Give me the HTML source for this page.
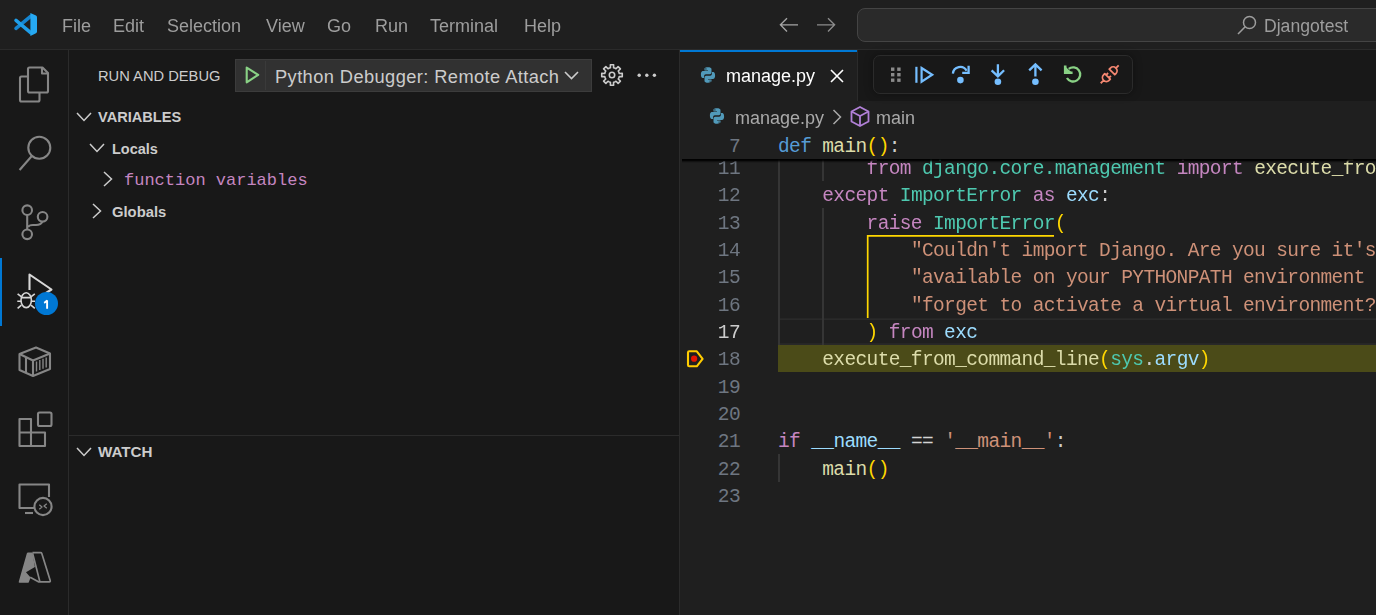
<!DOCTYPE html>
<html><head><meta charset="utf-8">
<style>
*{box-sizing:border-box;margin:0;padding:0}
html,body{width:1376px;height:615px;overflow:hidden;background:#181818}
body{position:relative;font-family:"Liberation Sans",sans-serif;color:#cccccc}
.a{position:absolute}
.t{position:absolute;white-space:pre}
svg{position:absolute;overflow:visible}
#title{left:0;top:0;width:1376px;height:49px;background:#1f1f1f}
#titleb{left:0;top:49px;width:1376px;height:1px;background:#2b2b2b}
.menu{font-size:18px;color:#9d9d9d;top:14px;line-height:24px;will-change:transform}
#act{left:0;top:50px;width:68px;height:565px;background:#181818}
#actb{left:68px;top:50px;width:1px;height:565px;background:#2b2b2b}
#side{left:69px;top:50px;width:610px;height:565px;background:#181818}
#sideb{left:679px;top:50px;width:1px;height:565px;background:#2b2b2b}
#editor{left:680px;top:101px;width:696px;height:514px;background:#1f1f1f}
#tabs{left:680px;top:50px;width:696px;height:51px;background:#181818}
#tab{left:680px;top:50px;width:177px;height:51px;background:#1f1f1f}
#tabtop{left:680px;top:50px;width:177px;height:2px;background:#0078d4}
#tabr{left:857px;top:50px;width:1px;height:51px;background:#2b2b2b}
.code{font-family:"Liberation Mono",monospace;font-size:19.5px;letter-spacing:-0.63px;line-height:27.33px;height:27.33px;padding-top:2.3px}
.ln{left:680px;width:60px;text-align:right;color:#6e7681}
.cl{left:778px;color:#cccccc}
.kw{color:#569cd6}.fn{color:#dcdcaa}.br{color:#ffd700}.ctl{color:#c586c0}.ty{color:#4ec9b0}.vr{color:#9cdcfe}.st{color:#ce9178}.op{color:#d4d4d4}
.guide{width:2px;background:#353535}
</style></head><body>
<!-- title bar -->
<div class="a" id="title"></div>
<div class="a" id="titleb"></div>
<svg style="left:8px;top:8px" width="36" height="34" viewBox="0 0 36 34">
 <path d="M8 20.4 L22.6 8.4" stroke="#1585d0" stroke-width="3.5" stroke-linecap="round"/>
 <path d="M8 12.3 L22.6 24.6" stroke="#1f9ee9" stroke-width="3.5" stroke-linecap="round"/>
 <path d="M22.4 5 L28 7.6 Q29 8.1 29 9.2 V23.6 Q29 24.7 28 25.2 L22.4 27.9 Z" fill="#26a9f3"/>
</svg>
<div class="t menu" style="left:62px">File</div>
<div class="t menu" style="left:113px">Edit</div>
<div class="t menu" style="left:167px">Selection</div>
<div class="t menu" style="left:266px">View</div>
<div class="t menu" style="left:327px">Go</div>
<div class="t menu" style="left:375px">Run</div>
<div class="t menu" style="left:430px">Terminal</div>
<div class="t menu" style="left:523.5px">Help</div>
<!-- nav arrows -->
<svg style="left:779px;top:17px" width="20" height="16" viewBox="0 0 20 16"><path d="M8 1.2 L1.4 7.8 L8 14.4 M1.4 7.8 H19" stroke="#a5a5a5" stroke-width="1.35" fill="none"/></svg>
<svg style="left:816px;top:17px" width="20" height="16" viewBox="0 0 20 16"><path d="M12 1.2 L18.6 7.8 L12 14.4 M18.6 7.8 H1" stroke="#8c8c8c" stroke-width="1.35" fill="none"/></svg>
<div class="a" style="left:857px;top:8px;width:600px;height:34px;border:1px solid #444444;border-radius:8px;background:#2a2a2a"></div>
<svg style="left:1237px;top:15px" width="20" height="20" viewBox="0 0 20 20"><circle cx="12.5" cy="7.5" r="6" stroke="#9d9d9d" stroke-width="1.5" fill="none"/><path d="M8.2 11.8 L1 19" stroke="#9d9d9d" stroke-width="1.6"/></svg>
<div class="t menu" style="left:1264px;top:14px;font-size:17.6px">Djangotest</div>

<!-- activity bar -->
<div class="a" id="act"></div>
<div class="a" id="actb"></div>
<div class="a" id="side"></div>
<div class="a" id="sideb"></div>

<!-- activity icons -->
<div class="a" style="left:0;top:258px;width:2px;height:68px;background:#0078d4"></div>
<svg style="left:0;top:50px" width="68" height="565" viewBox="0 50 68 565" fill="none" stroke="#868686" stroke-width="2.1" stroke-linejoin="round">
 <!-- explorer -->
 <path d="M27.5 76.5 H21.5 Q20 76.5 20 78 V100 Q20 101.5 21.5 101.5 H38 Q39.5 101.5 39.5 100 V92.5"/>
 <path d="M29.5 67.5 H42.5 L48 73 V91 Q48 92.5 46.5 92.5 H29.5 Q28 92.5 28 91 V69 Q28 67.5 29.5 67.5 Z"/>
 <path d="M42 67.5 V73.5 H48" />
 <!-- search -->
 <circle cx="39.3" cy="147.7" r="11"/>
 <path d="M31.8 156 L19.6 170"/>
 <!-- scm -->
 <circle cx="27.2" cy="210.2" r="4.8"/>
 <circle cx="27.2" cy="234.3" r="4.8"/>
 <circle cx="42.6" cy="216.8" r="4.8"/>
 <path d="M27.2 215 V229.5"/>
 <path d="M28 227 Q29 225 33 225 H36 Q41 225 42.3 221.6"/>
 <!-- containers -->
 <path d="M19.5 354 L36 347.5 L50 353.5 V369 L33 376 L19.5 370 Z"/>
 <path d="M19.5 354 L33 360.5 L50 353.5 M33 360.5 V376 M26 357 V372.5"/>
 <path d="M36.5 361.5 V371.5 M39.8 360 V370 M43 358.8 V368.7 M46.2 357.5 V367.5" stroke-width="1.4"/>
 <!-- extensions -->
 <path d="M19.5 419 H31 V446 H19.5 Z M19.5 432.5 H45 V446 H31"/>
 <rect x="38" y="412.5" width="13.5" height="13.5" rx="1.5"/>
 <!-- remote -->
 <path d="M34 508 H19.5 V484.5 H49 V497" />
 <path d="M25 513 H33" />
 <circle cx="43" cy="506.5" r="8.6"/>
 <path d="M39.3 504.8 L42 507 L39.3 509.2 M46.8 503.8 L44 506 L46.8 508.2" stroke-width="1.3"/>
 <!-- debug -->
 <path d="M29.5 290 V274.5 L51.5 289.5 L46 293" stroke="#d7d7d7"/>
</svg>
<!-- azure -->
<svg style="left:14px;top:548px" width="42" height="40" viewBox="0 0 42 40">
 <path d="M14 4.6 H18.4 L20.9 18.9 L12 24.2 L16.6 29.6 L14.8 34.3 Q14.5 34.8 13.8 34.8 H5.6 Q4.3 34.8 4.8 33.6 L12.8 5.6 Q13.1 4.6 14 4.6 Z" fill="#868686"/>
 <path d="M18.4 4.6 H26.6 Q27.5 4.6 27.8 5.5 L36.2 32.6 Q36.5 33.8 35.4 33.8 H24.4 L16.2 29.2 M18.6 5.2 L25.8 33.4" fill="none" stroke="#868686" stroke-width="1.7" stroke-linejoin="round"/>
</svg>
<!-- bug -->
<svg style="left:0;top:0" width="1" height="1" fill="none" stroke="#d7d7d7" stroke-width="1.6">
 <ellipse cx="26.2" cy="300.2" rx="5.2" ry="7.4"/>
 <path d="M21 297.6 H31.4 M17.3 301.2 H21 M35 301.2 H31.4 M17.6 293.8 L21.2 296.6 M34.8 293.8 L31.2 296.6 M17.6 308.3 L21.4 305.2 M34.8 308.3 L31 305.2"/>
</svg>
<div class="a" style="left:35px;top:292px;width:23px;height:23px;border-radius:50%;background:#0078d4;border:0 solid #181818"></div>
<svg style="left:0;top:0" width="1" height="1"><path d="M47.1 300.3 V308.7 M44.1 302.9 Q46 302 47.1 300.3" fill="none" stroke="#ffffff" stroke-width="1.9"/></svg>

<!-- sidebar -->
<div class="t" style="left:98px;top:64.5px;font-size:14.7px;line-height:22px;color:#cccccc">RUN AND DEBUG</div>
<div class="a" style="left:235px;top:59px;width:357px;height:33px;background:#313131;border:1px solid #3c3c3c"></div>
<div class="a" style="left:265px;top:61px;width:1px;height:29px;background:#3a3a3a"></div>
<svg style="left:244px;top:66px" width="16" height="18" viewBox="0 0 16 18"><path d="M2.7 1.6 L14.2 8.9 L2.7 16.3 Z" fill="none" stroke="#89d185" stroke-width="2.1" stroke-linejoin="round"/></svg>
<div class="t" style="left:275px;top:65px;font-size:18.3px;letter-spacing:0.4px;line-height:24px;color:#cccccc">Python Debugger: Remote Attach</div>
<svg style="left:564px;top:71px" width="15" height="9" viewBox="0 0 15 9"><path d="M1 1 L7.5 7.5 L14 1" fill="none" stroke="#cccccc" stroke-width="1.6"/></svg>
<svg style="left:600.4px;top:63.2px" width="24" height="24" viewBox="0 0 24 24"><path fill="none" stroke="#cccccc" stroke-width="1.6" stroke-linejoin="round" d="M18.91 9.35 L19.24 10.46 L22.27 10.37 L22.27 13.63 L19.24 13.54 L18.91 14.65 L18.76 15.01 L18.21 16.03 L20.41 18.11 L18.11 20.41 L16.03 18.21 L15.01 18.76 L14.65 18.91 L13.54 19.24 L13.63 22.27 L10.37 22.27 L10.46 19.24 L9.35 18.91 L8.99 18.76 L7.97 18.21 L5.89 20.41 L3.59 18.11 L5.79 16.03 L5.24 15.01 L5.09 14.65 L4.76 13.54 L1.73 13.63 L1.73 10.37 L4.76 10.46 L5.09 9.35 L5.24 8.99 L5.79 7.97 L3.59 5.89 L5.89 3.59 L7.97 5.79 L8.99 5.24 L9.35 5.09 L10.46 4.76 L10.37 1.73 L13.63 1.73 L13.54 4.76 L14.65 5.09 L15.01 5.24 L16.03 5.79 L18.11 3.59 L20.41 5.89 L18.21 7.97 L18.76 8.99 Z"/><circle cx="12" cy="12" r="2.7" fill="none" stroke="#cccccc" stroke-width="1.6"/></svg>
<svg style="left:637px;top:73px" width="20" height="5" viewBox="0 0 20 5"><circle cx="2.2" cy="2.3" r="1.7" fill="#cccccc"/><circle cx="9.8" cy="2.3" r="1.7" fill="#cccccc"/><circle cx="17.4" cy="2.3" r="1.7" fill="#cccccc"/></svg>

<svg style="left:76px;top:112px" width="16" height="10" viewBox="0 0 16 10"><path d="M1 1 L8 8.5 L15 1" fill="none" stroke="#cccccc" stroke-width="1.5"/></svg>
<div class="t" style="left:98px;top:106px;font-size:14.6px;line-height:22px;font-weight:bold;color:#cccccc">VARIABLES</div>
<svg style="left:89px;top:143px" width="16" height="10" viewBox="0 0 16 10"><path d="M1 1 L8 8.5 L15 1" fill="none" stroke="#cccccc" stroke-width="1.5"/></svg>
<div class="t" style="left:112px;top:138px;font-size:14.5px;line-height:22px;font-weight:bold;color:#cccccc">Locals</div>
<svg style="left:103px;top:171px" width="10" height="16" viewBox="0 0 10 16"><path d="M1 1 L8.5 8 L1 15" fill="none" stroke="#cccccc" stroke-width="1.5"/></svg>
<div class="t" style="left:124px;top:170px;font-family:'Liberation Mono',monospace;font-size:17px;line-height:22px;color:#c586c0">function variables</div>
<svg style="left:92px;top:203px" width="10" height="16" viewBox="0 0 10 16"><path d="M1 1 L8.5 8 L1 15" fill="none" stroke="#cccccc" stroke-width="1.5"/></svg>
<div class="t" style="left:112px;top:200.5px;font-size:14.8px;line-height:22px;font-weight:bold;color:#cccccc">Globals</div>

<div class="a" style="left:69px;top:435px;width:610px;height:1px;background:#2b2b2b"></div>
<svg style="left:76px;top:447px" width="16" height="10" viewBox="0 0 16 10"><path d="M1 1 L8 8.5 L15 1" fill="none" stroke="#cccccc" stroke-width="1.5"/></svg>
<div class="t" style="left:98px;top:440.5px;font-size:15.2px;line-height:22px;font-weight:bold;color:#cccccc">WATCH</div>
<div class="a" id="tabs"></div>
<div class="a" id="editor"></div>
<div class="a" id="tab"></div>
<div class="a" id="tabtop"></div>
<div class="a" id="tabr"></div>
<!-- code -->
<div class="a" style="left:778px;top:318px;width:598px;height:1px;background:#262626"></div><div class="a" style="left:778px;top:319px;width:598px;height:1px;background:#2a2a2a"></div><div class="a" style="left:778px;top:343px;width:598px;height:1px;background:#262626"></div><div class="a" style="left:778px;top:344px;width:598px;height:1px;background:#282828"></div>
<div class="a" style="left:778px;top:345.00px;width:598px;height:27.33px;background:#4b4b18"></div>
<div class="a guide" style="left:778px;top:159px;height:186.00px"></div>
<div class="a guide" style="left:822px;top:159px;height:22.02px"></div>
<div class="a guide" style="left:822px;top:208.35px;height:136.65px"></div>
<div class="a guide" style="left:778px;top:454.32px;height:27.33px"></div>
<svg style="left:0;top:0" width="1" height="1"><path d="M867.7 318 V235.9 H1054" fill="none" stroke="#ffd700" stroke-width="1.7"/></svg>

<div class="t code ln" style="top:153.69px;color:#6e7681">11</div>
<div class="t code cl" style="top:153.69px">        <span class="ctl">from</span> <span class="ty">django.core.management</span> <span class="ctl">import</span> <span class="fn">execute_from_command_line</span></div>
<div class="t code ln" style="top:181.02px;color:#6e7681">12</div>
<div class="t code cl" style="top:181.02px">    <span class="ctl">except</span> <span class="ty">ImportError</span> <span class="ctl">as</span> <span class="vr">exc</span>:</div>
<div class="t code ln" style="top:208.35px;color:#6e7681">13</div>
<div class="t code cl" style="top:208.35px">        <span class="ctl">raise</span> <span class="ty">ImportError</span><span class="br">(</span></div>
<div class="t code ln" style="top:235.68px;color:#6e7681">14</div>
<div class="t code cl" style="top:235.68px">            <span class="st">"Couldn't import Django. Are you sure it's installed and "</span></div>
<div class="t code ln" style="top:263.01px;color:#6e7681">15</div>
<div class="t code cl" style="top:263.01px">            <span class="st">"available on your PYTHONPATH environment variable? Did you "</span></div>
<div class="t code ln" style="top:290.34px;color:#6e7681">16</div>
<div class="t code cl" style="top:290.34px">            <span class="st">"forget to activate a virtual environment?"</span></div>
<div class="t code ln" style="top:317.67px;color:#cccccc">17</div>
<div class="t code cl" style="top:317.67px">        <span class="br">)</span> <span class="ctl">from</span> <span class="vr">exc</span></div>
<div class="t code ln" style="top:345.00px;color:#6e7681">18</div>
<div class="t code cl" style="top:345.00px">    <span class="fn">execute_from_command_line</span><span class="br">(</span><span class="ty">sys</span>.<span class="vr">argv</span><span class="br">)</span></div>
<div class="t code ln" style="top:372.33px;color:#6e7681">19</div>
<div class="t code cl" style="top:372.33px"></div>
<div class="t code ln" style="top:399.66px;color:#6e7681">20</div>
<div class="t code cl" style="top:399.66px"></div>
<div class="t code ln" style="top:426.99px;color:#6e7681">21</div>
<div class="t code cl" style="top:426.99px"><span class="ctl">if</span> <span class="vr">__name__</span> <span class="op">==</span> <span class="st">'__main__'</span>:</div>
<div class="t code ln" style="top:454.32px;color:#6e7681">22</div>
<div class="t code cl" style="top:454.32px">    <span class="fn">main</span><span class="br">()</span></div>
<div class="t code ln" style="top:481.65px;color:#6e7681">23</div>
<div class="t code cl" style="top:481.65px"></div>
<div class="a" style="left:857px;top:101px;width:519px;height:30.7px;background:#1f1f1f"></div>
<div class="a" style="left:680px;top:131.7px;width:696px;height:27.33px;background:#1f1f1f"></div><div class="a" style="left:682px;top:159px;width:694px;height:4px;background:linear-gradient(#000 0%,rgba(0,0,0,0.85) 35%,rgba(0,0,0,0.3) 70%,rgba(0,0,0,0) 100%)"></div>
<div class="t code ln" style="top:131.7px">7</div>
<div class="t code cl" style="top:131.7px"><span class="kw">def</span> <span class="fn">main</span><span class="br">()</span>:</div>
<svg style="left:686px;top:349.5px" width="18" height="18" viewBox="0 0 18 18"><path d="M3.2 1.3 H10.8 L16.6 8.8 L10.8 16.3 H3.2 Q2 16.3 2 15.1 V2.5 Q2 1.3 3.2 1.3 Z" fill="none" stroke="#ffcc00" stroke-width="2.1" stroke-linejoin="round"/><circle cx="8.1" cy="8.7" r="3.1" fill="#e51400"/></svg>

<!-- tab -->
<svg style="left:700px;top:67px" width="16" height="16" viewBox="0 0 16 16"><path fill="#519aba" d="M7.9 0.3C4.3 0.3 4.5 1.9 4.5 1.9V3.6H8V4.1H3.2C3.2 4.1 0.9 3.8 0.9 7.5C0.9 11.2 2.9 11 2.9 11H4.1V9.3C4.1 9.3 4 7.3 6.1 7.3H9.6C9.6 7.3 11.5 7.3 11.5 5.5V2.3C11.5 2.3 11.8 0.3 7.9 0.3ZM5.9 1.3A0.65 0.65 0 1 1 5.9 2.6A0.65 0.65 0 1 1 5.9 1.3Z"/><path fill="#519aba" d="M8.1 15.7C11.7 15.7 11.5 14.1 11.5 14.1V12.4H8V11.9H12.8C12.8 11.9 15.1 12.2 15.1 8.5C15.1 4.8 13.1 5 13.1 5H11.9V6.7C11.9 6.7 12 8.7 9.9 8.7H6.4C6.4 8.7 4.5 8.7 4.5 10.5V13.7C4.5 13.7 4.2 15.7 8.1 15.7ZM10.1 14.7A0.65 0.65 0 1 1 10.1 13.4A0.65 0.65 0 1 1 10.1 14.7Z"/></svg>
<div class="t" style="left:726px;top:63.5px;font-size:18px;line-height:24px;color:#ffffff">manage.py</div>
<svg style="left:830px;top:69px" width="14" height="14" viewBox="0 0 14 14"><path d="M1 1 L13 13 M13 1 L1 13" stroke="#ffffff" stroke-width="1.6"/></svg>
<!-- debug toolbar -->
<div class="a" style="left:873px;top:55px;width:260px;height:39px;border:1px solid #2b2b2b;border-radius:7px;background:#181818;box-shadow:0 0 8px rgba(0,0,0,0.36)"></div>
<svg style="left:891px;top:67px" width="10" height="16" viewBox="0 0 10 16" fill="#8a8a8a"><rect x="0" y="0.5" width="3.4" height="3.4"/><rect x="6.2" y="0.5" width="3.4" height="3.4"/><rect x="0" y="6" width="3.4" height="3.4"/><rect x="6.2" y="6" width="3.4" height="3.4"/><rect x="0" y="11.5" width="3.4" height="3.4"/><rect x="6.2" y="11.5" width="3.4" height="3.4"/></svg>
<svg style="left:914px;top:66px" width="20" height="18" viewBox="0 0 20 18" fill="none" stroke="#75beff" stroke-width="2.2"><path d="M2.4 0.8 V16.8"/><path d="M7.6 2 L18.2 8.7 L7.6 15.6 Z" stroke-linejoin="miter"/></svg>
<svg style="left:951px;top:64px" width="20" height="20" viewBox="0 0 20 20" fill="none" stroke="#75beff" stroke-width="2.3"><path d="M1.9 9.6 A7.3 7.3 0 0 1 15.6 6.8"/><path d="M17.6 1.8 V8.9 H11.2"/><circle cx="9.4" cy="16.1" r="3.3" fill="#75beff" stroke="none"/></svg>
<svg style="left:990px;top:63px" width="16" height="23" viewBox="0 0 16 23" fill="none" stroke="#75beff" stroke-width="2.3"><path d="M7.9 1.2 V12.5 M1.6 7.3 L7.9 13.4 L14.1 7.3"/><circle cx="7.9" cy="18.7" r="3.3" fill="#75beff" stroke="none"/></svg>
<svg style="left:1027px;top:63px" width="16" height="23" viewBox="0 0 16 23" fill="none" stroke="#75beff" stroke-width="2.3"><path d="M8.4 2.2 V13.6 M2.2 7.4 L8.4 1.4 L14.6 7.4"/><circle cx="8.4" cy="18.7" r="3.3" fill="#75beff" stroke="none"/></svg>
<svg style="left:1063px;top:65px" width="20" height="19" viewBox="0 0 20 19" fill="none" stroke="#89d185" stroke-width="2.3"><path d="M3.95 12.95 A7.1 7.1 0 1 0 5.73 3.81"/><path d="M2.2 0.6 V7.8 H9.6" stroke-width="2.6"/><path d="M2.2 1.5 L8.8 7.6 L2.2 7.6 Z" fill="#89d185" stroke="none"/></svg>
<svg style="left:1090px;top:55px" width="40" height="40" viewBox="-19.75 -19.2 40 40"><path transform="rotate(-45)" d="M3.2 -3.9 H4.8 A3.9 3.9 0 0 1 4.8 3.9 H3.2 Z M8.7 0 H12.6 M-3.2 -3.9 H-4.8 A3.9 3.9 0 0 0 -4.8 3.9 H-3.2 Z M-8.7 0 H-12.8 M-3.2 -2 H-0.3 M-3.2 2 H-0.3" fill="none" stroke="#f48771" stroke-width="1.8" stroke-linejoin="round"/></svg>
<!-- breadcrumbs -->
<svg style="left:709px;top:108px" width="16" height="16" viewBox="0 0 16 16"><path fill="#519aba" d="M7.9 0.3C4.3 0.3 4.5 1.9 4.5 1.9V3.6H8V4.1H3.2C3.2 4.1 0.9 3.8 0.9 7.5C0.9 11.2 2.9 11 2.9 11H4.1V9.3C4.1 9.3 4 7.3 6.1 7.3H9.6C9.6 7.3 11.5 7.3 11.5 5.5V2.3C11.5 2.3 11.8 0.3 7.9 0.3ZM5.9 1.3A0.65 0.65 0 1 1 5.9 2.6A0.65 0.65 0 1 1 5.9 1.3Z"/><path fill="#519aba" d="M8.1 15.7C11.7 15.7 11.5 14.1 11.5 14.1V12.4H8V11.9H12.8C12.8 11.9 15.1 12.2 15.1 8.5C15.1 4.8 13.1 5 13.1 5H11.9V6.7C11.9 6.7 12 8.7 9.9 8.7H6.4C6.4 8.7 4.5 8.7 4.5 10.5V13.7C4.5 13.7 4.2 15.7 8.1 15.7ZM10.1 14.7A0.65 0.65 0 1 1 10.1 13.4A0.65 0.65 0 1 1 10.1 14.7Z"/></svg>
<div class="t" style="left:735px;top:105.5px;font-size:18px;line-height:24px;color:#a9a9a9">manage.py</div>
<svg style="left:832px;top:109px" width="10" height="16" viewBox="0 0 10 16"><path d="M1.5 1 L8.5 8 L1.5 15" fill="none" stroke="#a9a9a9" stroke-width="1.5"/></svg>
<svg style="left:850px;top:106px" width="20" height="21" viewBox="0 0 20 21" fill="none" stroke="#b180d7" stroke-width="1.8" stroke-linejoin="round"><path d="M10 1 L18.5 5.5 V15.5 L10 20 L1.5 15.5 V5.5 Z"/><path d="M1.5 5.5 L10 10 L18.5 5.5 M10 10 V20"/></svg>
<div class="t" style="left:876px;top:105.5px;font-size:18px;line-height:24px;color:#a9a9a9">main</div>
</body></html>
